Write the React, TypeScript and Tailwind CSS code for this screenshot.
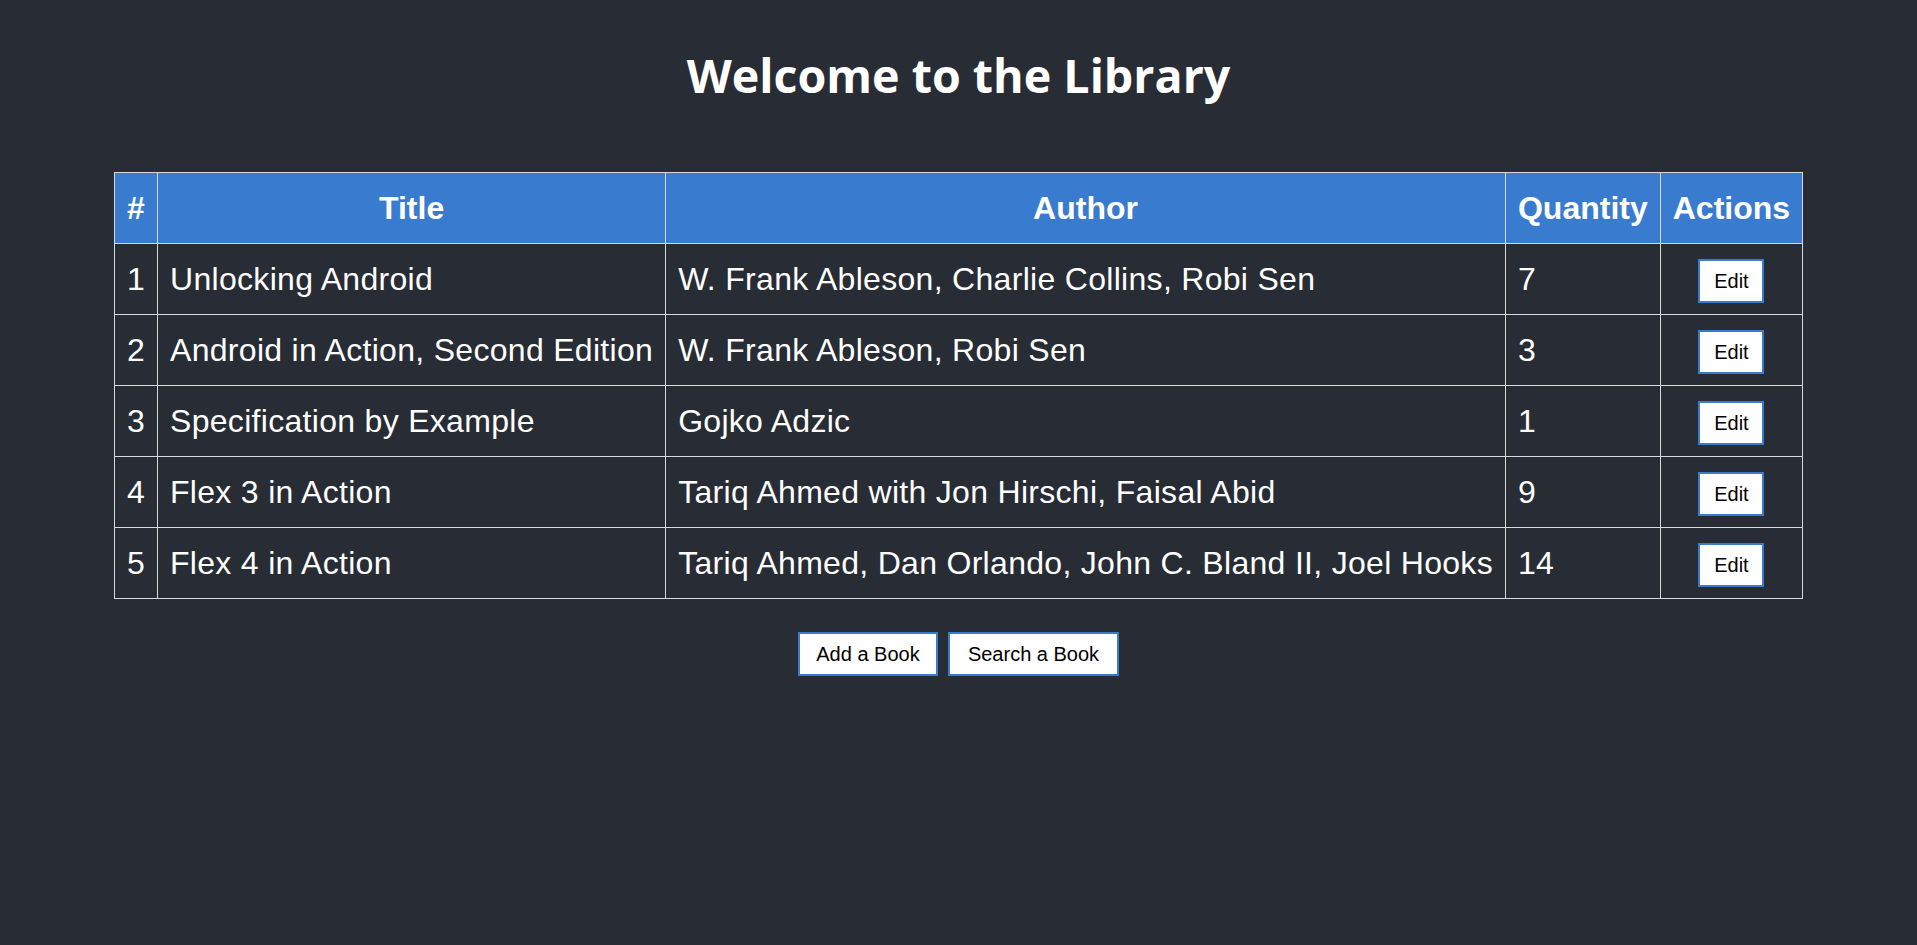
import React from 'react';

const books = [
  { id: 1, title: 'Unlocking Android', author: 'W. Frank Ableson, Charlie Collins, Robi Sen', quantity: 7 },
  { id: 2, title: 'Android in Action, Second Edition', author: 'W. Frank Ableson, Robi Sen', quantity: 3 },
  { id: 3, title: 'Specification by Example', author: 'Gojko Adzic', quantity: 1 },
  { id: 4, title: 'Flex 3 in Action', author: 'Tariq Ahmed with Jon Hirschi, Faisal Abid', quantity: 9 },
  { id: 5, title: 'Flex 4 in Action', author: 'Tariq Ahmed, Dan Orlando, John C. Bland II, Joel Hooks', quantity: 14 },
];

const headers = ['#', 'Title', 'Author', 'Quantity', 'Actions'];

const App = () => {
  return (
    <div className="min-h-screen w-full bg-[#282c34] flex flex-col items-center font-['Liberation_Sans',Arial,sans-serif]">
      {/* Heading */}
      <h1 className="pt-[43px] text-[46.6px] leading-[normal] font-bold text-white font-['Open_Sans',sans-serif]">
        Welcome to the Library
      </h1>

      {/* Book table */}
      <table className="mt-[65px] border-collapse text-[32px] text-white">
        <thead>
          <tr className="bg-[#397bce]">
            {headers.map((h) => (
              <th key={h} className="h-[71px] px-[12px] py-0 border border-[#d9d9d9] font-bold text-center">
                {h}
              </th>
            ))}
          </tr>
        </thead>
        <tbody className="tracking-[0.3px]">
          {books.map((book) => (
            <tr key={book.id}>
              <td className="h-[71px] px-[12px] py-0 border border-[#d9d9d9] text-left">{book.id}</td>
              <td className="h-[71px] px-[12px] py-0 border border-[#d9d9d9] text-left">{book.title}</td>
              <td className="h-[71px] px-[12px] py-0 border border-[#d9d9d9] text-left">{book.author}</td>
              <td className="h-[71px] px-[12px] py-0 border border-[#d9d9d9] text-left">{book.quantity}</td>
              <td className="h-[71px] px-[12px] py-0 border border-[#d9d9d9] text-center tracking-normal">
                <button className="w-[66px] h-[44px] bg-white border-2 border-[#397bce] text-black text-[20px] leading-none align-middle">
                  Edit
                </button>
              </td>
            </tr>
          ))}
        </tbody>
      </table>

      {/* Bottom actions */}
      <div className="mt-[33px] flex gap-[10px]">
        <button className="w-[140px] h-[44px] bg-white border-2 border-[#397bce] text-black text-[20px] leading-none">
          Add a Book
        </button>
        <button className="w-[171px] h-[44px] bg-white border-2 border-[#397bce] text-black text-[20px] leading-none">
          Search a Book
        </button>
      </div>
    </div>
  );
};

export default App;
